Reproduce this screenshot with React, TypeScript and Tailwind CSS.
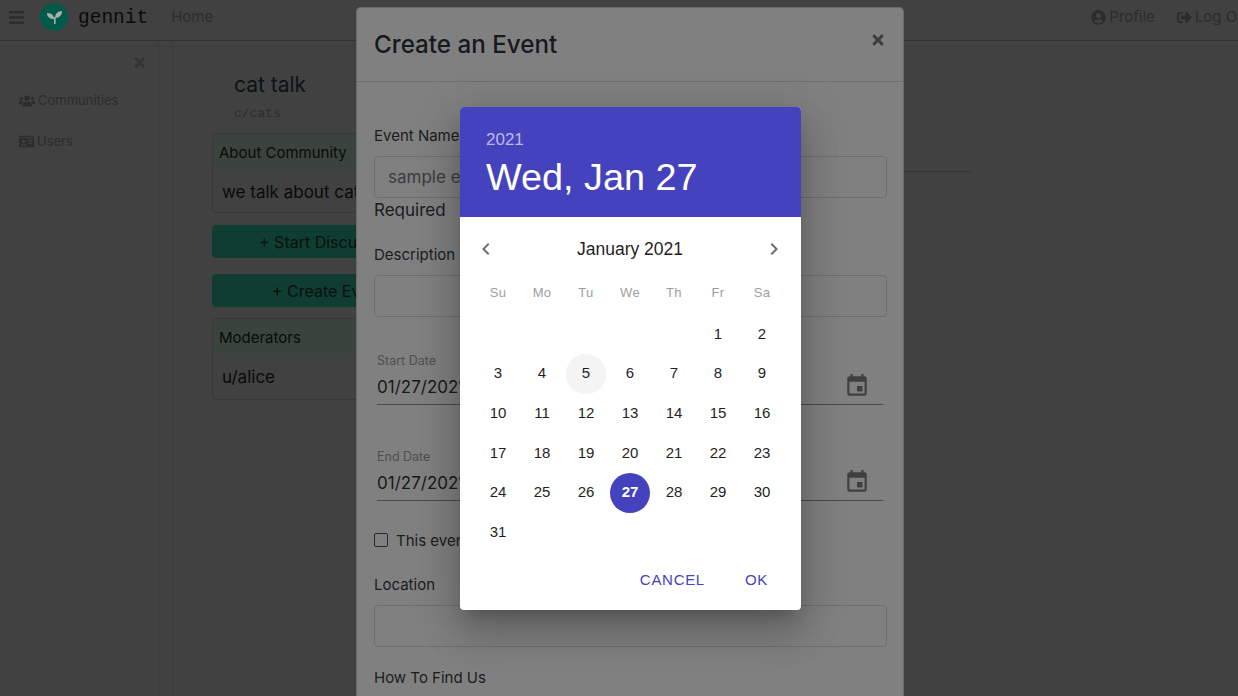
import { FaBars, FaIdCard, FaSignOutAlt, FaTimes, FaUserCircle, FaUsers } from 'react-icons/fa';
import { MdChevronLeft, MdChevronRight, MdEvent } from 'react-icons/md';

const weekdays = ['Su', 'Mo', 'Tu', 'We', 'Th', 'Fr', 'Sa'];
const days: (number | null)[] = [null, null, null, null, null, 1, 2];
for (let d = 3; d <= 31; d++) days.push(d);

function Sidebar() {
  return (
    <aside className="w-[159px] shrink-0 border-r border-[#3a3a3a] relative">
      <div className="flex justify-end pr-[11px] pt-[14px] text-[#333] text-[15px]">
        <FaTimes />
      </div>
      <div className="mt-[22px] pl-[19px] flex flex-col gap-[24px] text-[13px] leading-[17px] text-[#2c2c2c]">
        <div className="flex items-center gap-[3px]">
          <FaUsers className="text-[16px]" />
          <span>Communities</span>
        </div>
        <div className="flex items-center gap-[3px]">
          <FaIdCard className="text-[15px]" />
          <span>Users</span>
        </div>
      </div>
    </aside>
  );
}

function Card({ title, body, h }: { title: string; body: string; h: string }) {
  return (
    <div className={`border border-[#383838] rounded-[4px] overflow-hidden whitespace-nowrap ${h}`}>
      <div className="bg-[#3a443d] pl-[6px] pt-[3px] h-[35px] flex items-center text-[15px] text-[#0a0a0a]">{title}</div>
      <div className="pl-[9px] pt-[11px] text-[17px] leading-[24px] text-[#0a0a0a]">{body}</div>
    </div>
  );
}

function ActionButton({ label }: { label: string }) {
  return (
    <div className="h-[33px] rounded-[4px] bg-[#0f3d30] flex items-center justify-center text-[16px] text-[#0a0f0d] whitespace-nowrap">
      {label}
    </div>
  );
}

function PageBehind() {
  return (
    <div className="h-full flex flex-col">
      <nav className="h-[41px] shrink-0 border-b border-[#333] flex items-center pb-[7px] pt-[1px]">
        <FaBars className="ml-[8px] text-[17px] text-[#2c2c2c]" />
        <div className="ml-[15px] w-[28px] h-[28px] rounded-full bg-[#005a4a] flex items-center justify-center">
          <svg width="28" height="28" viewBox="0 0 28 28" fill="#a9b0ae">
            <path d="M7 10C11 10 14 12 14 16C10 16 7 14 7 10Z" />
            <path d="M22 8C22 12 19.5 15 15 15C15 11 17.5 8 22 8Z" />
            <path d="M14 14H15.6V21H14Z" />
          </svg>
        </div>
        <span className="ml-[10px] pt-[3px] text-[19.5px] font-['Liberation_Mono',monospace] text-[#0a0a0a]">gennit</span>
        <span className="ml-[23px] text-[15px] text-[#2c2c2c]">Home</span>
        <div className="ml-auto flex items-center gap-[22px] text-[15px] text-[#2c2c2c] whitespace-nowrap -mr-[13px]">
          <span className="flex items-center gap-[3px]"><FaUserCircle />Profile</span>
          <span className="flex items-center gap-[3px]"><FaSignOutAlt />Log Out</span>
        </div>
      </nav>
      <div className="flex-1 flex">
        <Sidebar />
        <div className="w-[14px] shrink-0 border-r border-[#3a3a3a]" />
        <main className="flex-1 pl-[39px] flex gap-[20px]">
          <div className="w-[232px] shrink-0">
            <h1 className="pl-[22px] mt-[30px] text-[21px] leading-[28px] text-[#0a1414]">cat talk</h1>
            <p className="pl-[22px] mt-[6px] text-[13px] leading-[18px] font-['Liberation_Mono',monospace] text-[#2c2c2c]">c/cats</p>
            <div className="mt-[10px]">
              <Card title="About Community" body="we talk about cats" h="h-[80px]" />
            </div>
            <div className="mt-[12px] flex flex-col gap-[16px]">
              <ActionButton label="+ Start Discussion" />
              <ActionButton label="+ Create Event" />
            </div>
            <div className="mt-[11px]">
              <Card title="Moderators" body="u/alice" h="h-[82px]" />
            </div>
          </div>
          <div className="w-[507px] shrink-0 pt-[130px]">
            <div className="border-b border-[#333]" />
          </div>
        </main>
      </div>
    </div>
  );
}

function Field({ label, value }: { label: string; value?: string }) {
  return (
    <div>
      <div className="text-[15px] leading-[20px] text-[#1a1c1e]">{label}</div>
      <div className="mt-[10px] h-[42px] border border-[#6c6e72] rounded-[4px] flex items-center pl-[13px] pt-[2px] text-[17px] text-[#3a3c3f]">
        {value}
      </div>
    </div>
  );
}

function DateField({ label }: { label: string }) {
  return (
    <div className="ml-[3px] mr-[4px] h-[52px] border-b border-[#4a4a4a] relative">
      <div className="text-[12.5px] leading-[16px] text-[#4f4f4f]">{label}</div>
      <div className="mt-[6px] text-[17px] leading-[24px] text-[#17191b]">01/27/2021</div>
      <MdEvent className="absolute right-[13px] top-[20px] text-[26px] text-[#3f3f3f]" />
    </div>
  );
}

function EventModal() {
  return (
    <div className="absolute left-[356px] top-[7px] w-[548px] h-[720px] bg-[#808080] rounded-[5px] border-x border-t border-[#6a6a6a]">
      <div className="h-[74px] border-b border-[#6e6e6e] flex items-start justify-between pl-[17px] pr-[17px]">
        <h2 className="mt-[19px] text-[24.2px] leading-[36px] font-medium text-[#17191c]">Create an Event</h2>
        <FaTimes className="mt-[24px] text-[16px] text-[#3c3c3c]" />
      </div>
      <div className="pl-[17px] pr-[16px] pt-[44px]">
        <Field label="Event Name" value="sample event" />
        <div className="text-[17px] leading-[24px] text-[#1a1c1e]">Required</div>
        <div className="mt-[23px]">
          <Field label="Description" />
        </div>
        <div className="mt-[36px]">
          <DateField label="Start Date" />
        </div>
        <div className="mt-[44px]">
          <DateField label="End Date" />
        </div>
        <label className="mt-[29px] flex items-center gap-[8px] text-[15px] leading-[22px] text-[#1a1c1e]">
          <span className="w-[14px] h-[14px] -mt-[2px] border border-[#2a2a2a] rounded-[2px]" />
          This event is virtual
        </label>
        <div className="mt-[23px]">
          <Field label="Location" />
        </div>
        <div className="mt-[21px] text-[15px] leading-[20px] text-[#1a1c1e]">How To Find Us</div>
      </div>
    </div>
  );
}

function DatePicker() {
  return (
    <div className="absolute left-[460px] top-[107px] w-[341px] h-[503px] bg-white rounded-[4px] overflow-hidden font-['Liberation_Sans',sans-serif] shadow-[0_11px_15px_-7px_rgba(0,0,0,0.2),0_24px_38px_3px_rgba(0,0,0,0.14),0_9px_46px_8px_rgba(0,0,0,0.12)]">
      <div className="h-[110px] bg-[#4542bd] pl-[26px] pt-[22px] text-white">
        <div className="text-[17px] leading-[22px] text-[#bdbbe8]">2021</div>
        <div className="mt-[1px] text-[37.8px] leading-[50px]">Wed, Jan 27</div>
      </div>
      <div className="h-[64px] flex items-center justify-between pl-[14px] pr-[15px]">
        <MdChevronLeft className="text-[24px] text-[#6e6e6e]" />
        <span className="text-[17.5px] text-[#1f1f1f]">January 2021</span>
        <MdChevronRight className="text-[24px] text-[#6e6e6e]" />
      </div>
      <div className="mt-[2px] pl-[16px] grid grid-cols-[repeat(7,44px)] text-[13px] leading-[20px] tracking-[0.3px] text-[#9e9e9e]">
        {weekdays.map((w) => (
          <div key={w} className="text-center">{w}</div>
        ))}
      </div>
      <div className="mt-[11px] pl-[16px] grid grid-cols-[repeat(7,44px)] auto-rows-[39.7px] text-[15px] text-[#1f1f1f]">
        {days.map((d, i) => (
          <div key={i} className="flex items-center justify-center">
            {d && (
              <span
                className={
                  d === 27
                    ? 'w-[40px] h-[40px] rounded-full flex items-center justify-center bg-[#4542bd] text-white font-bold'
                    : d === 5
                      ? 'w-[40px] h-[40px] rounded-full flex items-center justify-center bg-[#f4f4f4]'
                      : 'w-[40px] h-[40px] flex items-center justify-center'
                }
              >
                {d}
              </span>
            )}
          </div>
        ))}
      </div>
      <div className="mt-[18px] flex justify-end gap-[40px] pr-[33px] text-[15px] leading-[20px] tracking-[0.7px] text-[#4542bd]">
        <span>CANCEL</span>
        <span>OK</span>
      </div>
    </div>
  );
}

export default function App() {
  return (
    <div className="relative w-[1238px] h-[696px] overflow-hidden bg-[#414141] font-['Inter',sans-serif]">
      <PageBehind />
      <EventModal />
      <DatePicker />
    </div>
  );
}
